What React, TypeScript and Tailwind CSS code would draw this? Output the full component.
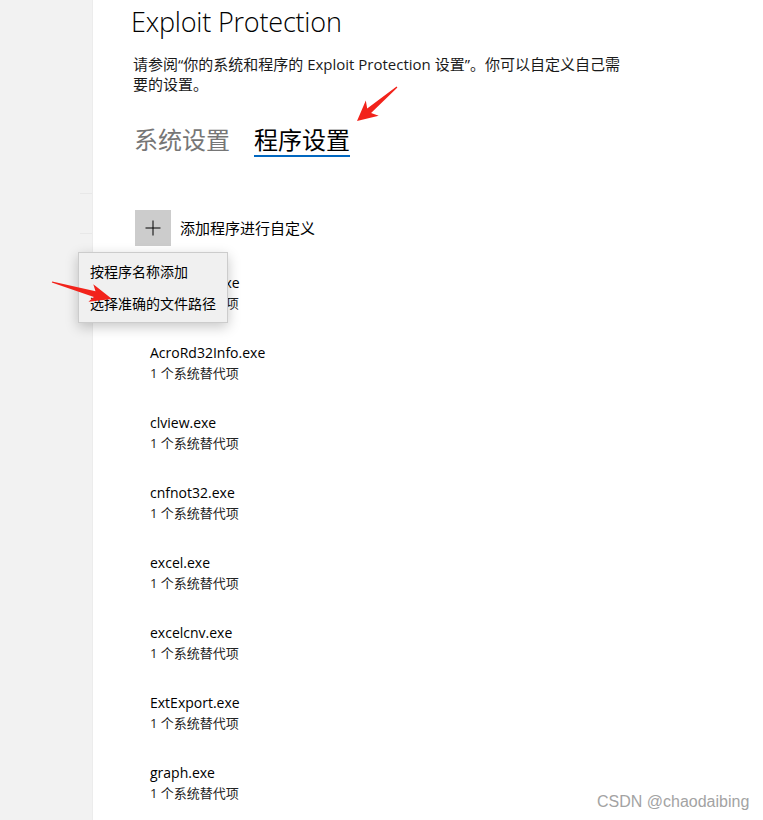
import React from "react";

type P = [number, number];

function arrowPoints(tail: P, tip: P, headLen: number, headW: number, shaftW: number): string {
  const dx = tip[0] - tail[0];
  const dy = tip[1] - tail[1];
  const L = Math.hypot(dx, dy);
  const ux = dx / L;
  const uy = dy / L;
  const nx = -uy;
  const ny = ux;
  const bx = tip[0] - ux * headLen;
  const by = tip[1] - uy * headLen;
  const pts: P[] = [
    [tail[0] + nx * 0.6, tail[1] + ny * 0.6],
    [bx + nx * (shaftW / 2), by + ny * (shaftW / 2)],
    [bx - ux * 4 + nx * (headW / 2), by - uy * 4 + ny * (headW / 2)],
    [tip[0], tip[1]],
    [bx - ux * 4 - nx * (headW / 2), by - uy * 4 - ny * (headW / 2)],
    [bx - nx * (shaftW / 2), by - ny * (shaftW / 2)],
    [tail[0] - nx * 0.6, tail[1] - ny * 0.6],
  ];
  return pts.map((p) => `${p[0].toFixed(1)},${p[1].toFixed(1)}`).join(" ");
}

const items = [
  "AcroRd32.exe",
  "AcroRd32Info.exe",
  "clview.exe",
  "cnfnot32.exe",
  "excel.exe",
  "excelcnv.exe",
  "ExtExport.exe",
  "graph.exe",
];

const font = "font-['Segoe_UI','Open_Sans','Noto_Sans_CJK_SC',sans-serif]";

export default function App() {
  return (
    <div className={`relative flex h-[820px] w-[763px] overflow-hidden bg-white text-black ${font}`}>
      <aside className="flex w-[93px] shrink-0 flex-col border-r border-[#ececec] bg-[#f2f2f2]">
        <div className="h-[193px]" />
        <div className="ml-[80px] h-px bg-[#e8e8e8]" />
        <div className="h-[39px]" />
        <div className="ml-[80px] h-px bg-[#e8e8e8]" />
      </aside>

      <main className="flex flex-1 flex-col pl-[38px] pt-[4px]">
        <h1 className="text-[27px] font-light leading-[36px] tracking-[-0.2px]">Exploit Protection</h1>
        <p className="ml-[2px] mt-[14px] text-[15px] leading-[20px] text-[#1a1a1a]">
          <span className="whitespace-nowrap">请参阅“你的系统和程序的 Exploit Protection 设置”。你可以自定义自己需</span>
          <br />
          <span className="whitespace-nowrap">要的设置。</span>
        </p>

        <div className="ml-[3px] mt-[29px] flex items-start gap-[24px] font-['Noto_Sans_CJK_SC',sans-serif] text-[24px] leading-[32px]">
          <span className="text-[#767676]">系统设置</span>
          <span className="border-b-2 border-[#0067c0] text-black">程序设置</span>
        </div>

        <div className="ml-[4px] mt-[53px] flex items-center">
          <div className="flex h-[36px] w-[36px] items-center justify-center bg-[#cccccc]">
            <svg width="16" height="16" viewBox="0 0 16 16">
              <path d="M8 0.5V15.5M0.5 8H15.5" stroke="#000" strokeWidth="1" fill="none" />
            </svg>
          </div>
          <span className="ml-[9px] text-[15px] leading-[20px]">添加程序进行自定义</span>
        </div>

        <div className="ml-[19px] mt-[27px] flex flex-col">
          {items.map((name) => (
            <div key={name} className="flex h-[70px] flex-col">
              <span className="text-[14px] leading-[20px]">{name}</span>
              <span className="text-[13px] leading-[20px] text-[#222]">1 个系统替代项</span>
            </div>
          ))}
        </div>
      </main>

      <div className="absolute left-[78px] top-[252px] flex w-[150px] flex-col border border-[#cccccc] bg-[#f0f0f0] pb-[3px] pt-[2px] shadow-[0_4px_12px_rgba(0,0,0,0.22)]">
        <div className="flex h-[32px] items-center pl-[11px] text-[14px]">按程序名称添加</div>
        <div className="flex h-[32px] items-center pl-[11px] text-[14px]">选择准确的文件路径</div>
      </div>

      <svg className="pointer-events-none absolute left-0 top-0" width="763" height="820">
        <polygon points={arrowPoints([397, 87], [357, 121], 16, 20, 6)} fill="#f2231b" />
        <polygon points={arrowPoints([52, 282], [112, 299], 18, 18, 6)} fill="#f2231b" />
      </svg>

      <div className="absolute left-[597px] top-[792px] font-['Liberation_Sans',sans-serif] text-[16px] leading-[20px] text-[#a3a3a3]">
        CSDN @chaodaibing
      </div>
    </div>
  );
}
